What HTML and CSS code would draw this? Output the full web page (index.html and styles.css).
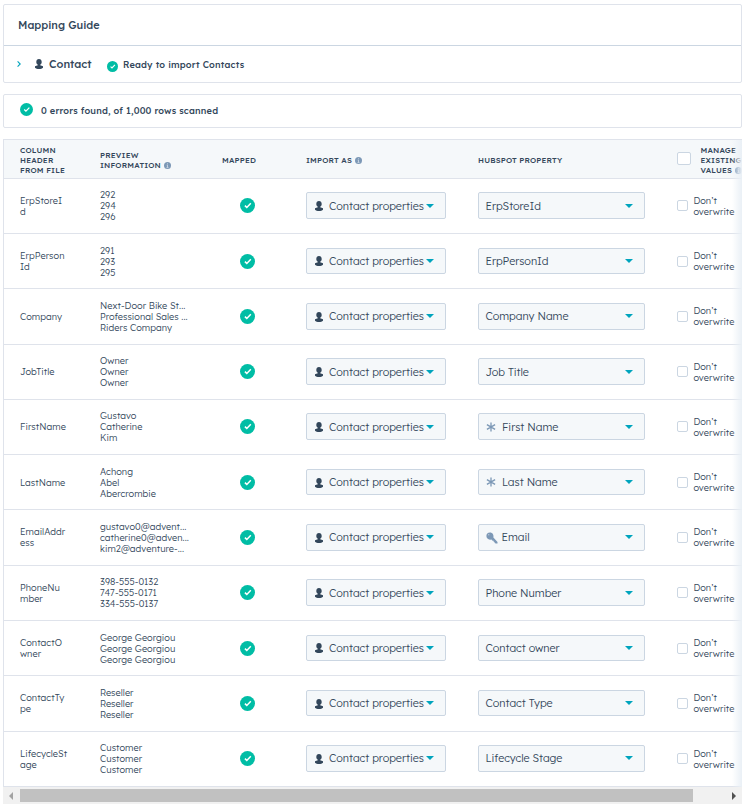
FILE: index.html
```html
<!DOCTYPE html>
<html lang="en">
<head>
<meta charset="utf-8">
<title>Mapping Guide</title>
<link rel="stylesheet" href="styles.css">
</head>
<body>
<svg class="sprite" aria-hidden="true">
  <symbol id="check" viewBox="0 0 15 15"><circle cx="7.5" cy="7.5" r="7.5" fill="#00bda5"/><path d="M4.9 7.6l1.9 1.8 4-4.1" fill="none" stroke="#fff" stroke-width="1.5"/></symbol>
  <symbol id="person" viewBox="0 0 8 10"><path d="M4 0C5.700 0 6.700 1.200 6.700 2.900 6.700 4.200 6 5.100 5.200 5.700V6.300L8 7.300V8.700C7.200 9.600 5.700 10 4 10S.8 9.600 0 8.700V7.300L2.800 6.300V5.700C2 5.100 1.300 4.200 1.300 2.900 1.300 1.200 2.300 0 4 0Z" fill="#33475b"/></symbol>
  <symbol id="caret" viewBox="0 0 8 4"><path d="M0 0h8L4 4z" fill="#00a4bd"/></symbol>
  <symbol id="info" viewBox="0 0 7 7"><circle cx="3.500" cy="3.500" r="3.500" fill="#7c98b6"/><path d="M3.500 1.300v1M2.700 3.100h.8v2.300M2.500 5.400h2" stroke="#dfe7ef" stroke-width=".7" fill="none"/></symbol>
  <symbol id="star" viewBox="0 0 10 10"><path d="M5 .5v9M.9 2.600l8.200 4.800M9.100 2.600L.9 7.400" stroke="#7c98b6" stroke-width="1.300"/></symbol>
  <symbol id="key" viewBox="0 0 12 12"><path d="M4 .5a3.600 3.600 0 0 0-3.600 3.600c0 2.200 1.700 3.700 3.800 3.600L5.400 7.500l1.200 1.300 1-.1v1l1 .2v1l1.300.7h1.600V10L7.400 5.500C7.900 2.800 6.500.5 4 .5z" fill="#7c98b6"/><circle cx="2.800" cy="2.800" r=".5" fill="#f5f8fa"/></symbol>
</svg>

<section class="panel guide">
  <h1 class="guide-title">Mapping Guide</h1>
  <div class="guide-row">
    <svg class="chevron" viewBox="0 0 4 6"><path d="M.6.4L3.200 3 .6 5.600" fill="none" stroke="#00a4bd" stroke-width="1.100"/></svg>
    <svg class="guide-person"><use href="#person"/></svg>
    <span class="guide-object">Contact</span>
    <svg class="guide-check"><use href="#check"/></svg>
    <span class="guide-status">Ready to import Contacts</span>
  </div>
</section>

<section class="panel scan">
  <svg class="scan-check"><use href="#check"/></svg>
  <span>0 errors found, of 1,000 rows scanned</span>
</section>

<main class="table">
  <div class="row head">
    <span>COLUMN<br>HEADER<br>FROM FILE</span>
    <span>PREVIEW<br>INFORMATION <svg class="info"><use href="#info"/></svg></span>
    <span>MAPPED</span>
    <span>IMPORT AS <svg class="info"><use href="#info"/></svg></span>
    <span>HUBSPOT PROPERTY</span>
    <div class="manage"><i class="box large"></i><span>MANAGE<br>EXISTING<br>VALUES <svg class="info"><use href="#info"/></svg></span></div>
  </div>
  <div class="row">
    <span>ErpStoreI<br>d</span><span>292<br>294<br>296</span><svg class="mapped"><use href="#check"/></svg>
    <div class="select"><svg class="person"><use href="#person"/></svg><span>Contact properties</span><svg class="caret"><use href="#caret"/></svg></div>
    <div class="select property"><span>ErpStoreId</span><svg class="caret"><use href="#caret"/></svg></div>
    <div class="option"><i class="box"></i><span>Don’t<br>overwrite</span></div>
  </div>
  <div class="row">
    <span>ErpPerson<br>Id</span><span>291<br>293<br>295</span><svg class="mapped"><use href="#check"/></svg>
    <div class="select"><svg class="person"><use href="#person"/></svg><span>Contact properties</span><svg class="caret"><use href="#caret"/></svg></div>
    <div class="select property"><span>ErpPersonId</span><svg class="caret"><use href="#caret"/></svg></div>
    <div class="option"><i class="box"></i><span>Don’t<br>overwrite</span></div>
  </div>
  <div class="row">
    <span>Company</span><span>Next-Door Bike St...<br>Professional Sales ...<br>Riders Company</span><svg class="mapped"><use href="#check"/></svg>
    <div class="select"><svg class="person"><use href="#person"/></svg><span>Contact properties</span><svg class="caret"><use href="#caret"/></svg></div>
    <div class="select property"><span>Company Name</span><svg class="caret"><use href="#caret"/></svg></div>
    <div class="option"><i class="box"></i><span>Don’t<br>overwrite</span></div>
  </div>
  <div class="row">
    <span>JobTitle</span><span>Owner<br>Owner<br>Owner</span><svg class="mapped"><use href="#check"/></svg>
    <div class="select"><svg class="person"><use href="#person"/></svg><span>Contact properties</span><svg class="caret"><use href="#caret"/></svg></div>
    <div class="select property"><span>Job Title</span><svg class="caret"><use href="#caret"/></svg></div>
    <div class="option"><i class="box"></i><span>Don’t<br>overwrite</span></div>
  </div>
  <div class="row">
    <span>FirstName</span><span>Gustavo<br>Catherine<br>Kim</span><svg class="mapped"><use href="#check"/></svg>
    <div class="select"><svg class="person"><use href="#person"/></svg><span>Contact properties</span><svg class="caret"><use href="#caret"/></svg></div>
    <div class="select property"><svg class="star"><use href="#star"/></svg><span>First Name</span><svg class="caret"><use href="#caret"/></svg></div>
    <div class="option"><i class="box"></i><span>Don’t<br>overwrite</span></div>
  </div>
  <div class="row">
    <span>LastName</span><span>Achong<br>Abel<br>Abercrombie</span><svg class="mapped"><use href="#check"/></svg>
    <div class="select"><svg class="person"><use href="#person"/></svg><span>Contact properties</span><svg class="caret"><use href="#caret"/></svg></div>
    <div class="select property"><svg class="star"><use href="#star"/></svg><span>Last Name</span><svg class="caret"><use href="#caret"/></svg></div>
    <div class="option"><i class="box"></i><span>Don’t<br>overwrite</span></div>
  </div>
  <div class="row">
    <span>EmailAddr<br>ess</span><span>gustavo0@advent...<br>catherine0@adven...<br>kim2@adventure-...</span><svg class="mapped"><use href="#check"/></svg>
    <div class="select"><svg class="person"><use href="#person"/></svg><span>Contact properties</span><svg class="caret"><use href="#caret"/></svg></div>
    <div class="select property"><svg class="key"><use href="#key"/></svg><span>Email</span><svg class="caret"><use href="#caret"/></svg></div>
    <div class="option"><i class="box"></i><span>Don’t<br>overwrite</span></div>
  </div>
  <div class="row">
    <span>PhoneNu<br>mber</span><span>398-555-0132<br>747-555-0171<br>334-555-0137</span><svg class="mapped"><use href="#check"/></svg>
    <div class="select"><svg class="person"><use href="#person"/></svg><span>Contact properties</span><svg class="caret"><use href="#caret"/></svg></div>
    <div class="select property"><span>Phone Number</span><svg class="caret"><use href="#caret"/></svg></div>
    <div class="option"><i class="box"></i><span>Don’t<br>overwrite</span></div>
  </div>
  <div class="row">
    <span>ContactO<br>wner</span><span>George Georgiou<br>George Georgiou<br>George Georgiou</span><svg class="mapped"><use href="#check"/></svg>
    <div class="select"><svg class="person"><use href="#person"/></svg><span>Contact properties</span><svg class="caret"><use href="#caret"/></svg></div>
    <div class="select property"><span>Contact owner</span><svg class="caret"><use href="#caret"/></svg></div>
    <div class="option"><i class="box"></i><span>Don’t<br>overwrite</span></div>
  </div>
  <div class="row">
    <span>ContactTy<br>pe</span><span>Reseller<br>Reseller<br>Reseller</span><svg class="mapped"><use href="#check"/></svg>
    <div class="select"><svg class="person"><use href="#person"/></svg><span>Contact properties</span><svg class="caret"><use href="#caret"/></svg></div>
    <div class="select property"><span>Contact Type</span><svg class="caret"><use href="#caret"/></svg></div>
    <div class="option"><i class="box"></i><span>Don’t<br>overwrite</span></div>
  </div>
  <div class="row">
    <span>LifecycleSt<br>age</span><span>Customer<br>Customer<br>Customer</span><svg class="mapped"><use href="#check"/></svg>
    <div class="select"><svg class="person"><use href="#person"/></svg><span>Contact properties</span><svg class="caret"><use href="#caret"/></svg></div>
    <div class="select property"><span>Lifecycle Stage</span><svg class="caret"><use href="#caret"/></svg></div>
    <div class="option"><i class="box"></i><span>Don’t<br>overwrite</span></div>
  </div>
  <div class="edge-fade"></div>
</main>
<div class="scrollbar">
  <svg class="arrow" viewBox="0 0 4 8"><path d="M4 0v8L0 4z" fill="#a3a3a3"/></svg>
  <div class="thumb"></div>
  <svg class="arrow" viewBox="0 0 4 8"><path d="M0 0v8l4-4z" fill="#505050"/></svg>
</div>
</body>
</html>
```
FILE: styles.css
```css
* { box-sizing: border-box; }
body {
  margin: 0;
  padding: 4px 7px 0 3px;
  background: #fff;
  color: #33475b;
  font-family: "Lexend Deca", Lexend, Inter, sans-serif;
  font-weight: 260;
}
svg { flex: none; display: block; }
.sprite { position: absolute; width: 0; height: 0; }

.panel { border: 1px solid #dfe3eb; border-radius: 2px; font-weight: 550; }
.guide { height: 79px; margin-bottom: 11px; }
.guide-title {
  margin: 0;
  height: 41px;
  padding-left: 14px;
  border-bottom: 1px solid #cbd6e2;
  font-size: 10.800px;
  line-height: 41px;
  font-weight: 550;
}
.guide-row { display: flex; align-items: center; height: 36px; padding-left: 13px; }
.chevron { width: 4px; height: 6px; margin-right: 14px; }
.guide-person { width: 8px; height: 10px; margin-right: 6px; }
.guide-object { width: 58px; font-size: 11px; }
.guide-check { width: 11px; height: 11px; margin: 4px 5px 0 0; }
.guide-status { padding-top: 1px; font-size: 9.200px; letter-spacing: .18px; }
.scan { display: flex; align-items: center; height: 34px; margin-bottom: 11px; padding-left: 16px; font-size: 9.200px; letter-spacing: .18px; }
.scan span { padding-bottom: 1px; }
.scan-check { width: 13px; height: 13px; margin: 0 8px 3px 0; }

.table {
  position: relative;
  display: grid;
  grid-template-rows: 38.900px repeat(11, 55.270px);
  height: 648px;
  border-top: 1px solid #dfe3eb;
  border-left: 1px solid #dfe3eb;
  overflow: hidden;
}
.row {
  display: grid;
  grid-template-columns: 80px 122px 84px 172px 199px 70px;
  align-items: center;
  padding: 0 0 .3px 16px;
  border-bottom: 1px solid #dfe3eb;
  font-size: 9.200px;
  letter-spacing: .04px;
  line-height: 11px;
  white-space: nowrap;
}
.head { padding-top: 2px; padding-bottom: 0; background: #f5f8fa; font-size: 7.800px; line-height: 10px; font-weight: 500; letter-spacing: .16px; }
.info { display: inline-block; width: 7px; height: 7px; margin-left: 1px; vertical-align: -1px; }
.mapped { width: 15px; height: 15px; margin-left: 18px; }
.select {
  display: flex;
  align-items: center;
  width: 140px;
  height: 26.600px;
  margin-top: -.3px;
  padding: 0 11px 0 8px;
  border: 1px solid #cbd6e2;
  border-radius: 2px;
  background: #f5f8fa;
  font-size: 10.800px;
  letter-spacing: -.03px;
}
.select span { padding-top: 1px; }
.select .person { width: 8px; height: 10px; margin: 1px 6px 0 0; }
.caret { width: 8px; height: 4px; margin-left: auto; }
.property { width: 167px; padding-left: 6.500px; }
.star { width: 10px; height: 10px; margin: 0 6px 0 .5px; }
.key { width: 12px; height: 12px; margin: 2px 4px 0 0; }
.option { display: flex; align-items: center; gap: 5.400px; }
.box { width: 11px; height: 11px; border: 1px solid #cbd6e2; border-radius: 2px; background: #fff; }
.manage { display: flex; align-items: center; gap: 9.500px; }
.large { width: 14px; height: 13px; margin-bottom: 3px; }
.edge-fade {
  position: absolute;
  top: 0;
  right: 0;
  bottom: 0;
  width: 10px;
  background: linear-gradient(to right, rgba(234, 240, 246, 0), #eaf0f6);
}

.scrollbar { display: flex; align-items: center; height: 17px; padding: 0 6px; background: #f1f1f1; }
.arrow { width: 4px; height: 8px; }
.thumb { width: 673px; height: 13px; margin: 0 auto 0 7px; background: #c1c1c1; }
```
